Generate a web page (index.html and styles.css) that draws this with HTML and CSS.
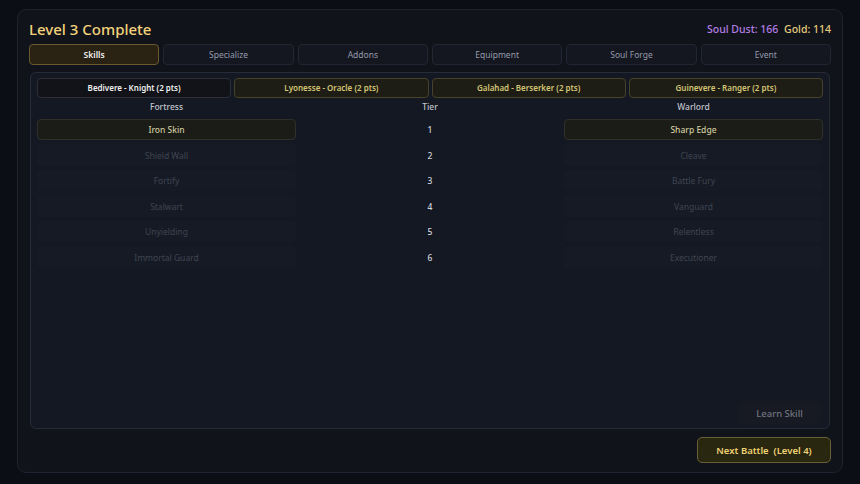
FILE: index.html
```html
<!DOCTYPE html>
<html lang="en">
<head>
    <meta charset="UTF-8">
    <meta name="viewport" content="width=device-width, initial-scale=1.0">
    <title>Level 3 Complete</title>
    <link rel="stylesheet" href="styles.css">
</head>
<body>
    <div class="panel">
        <div class="header">
            <h1>Level 3 Complete</h1>
            <div class="currency">
                <span class="dust">Soul Dust: 166</span>
                <span class="gold">Gold: 114</span>
            </div>
        </div>

        <div class="tabs">
            <div class="tab active">Skills</div>
            <div class="tab">Specialize</div>
            <div class="tab">Addons</div>
            <div class="tab">Equipment</div>
            <div class="tab">Soul Forge</div>
            <div class="tab">Event</div>
        </div>

        <div class="skills">
            <div class="heroes">
                <div class="hero selected">Bedivere - Knight (2 pts)</div>
                <div class="hero">Lyonesse - Oracle (2 pts)</div>
                <div class="hero">Galahad - Berserker (2 pts)</div>
                <div class="hero">Guinevere - Ranger (2 pts)</div>
            </div>

            <div class="tree">
                <div class="col-head">Fortress</div>
                <div class="col-head">Tier</div>
                <div class="col-head">Warlord</div>

                <div class="skill learned">Iron Skin</div>
                <div class="tier">1</div>
                <div class="skill learned">Sharp Edge</div>

                <div class="skill">Shield Wall</div>
                <div class="tier">2</div>
                <div class="skill">Cleave</div>

                <div class="skill">Fortify</div>
                <div class="tier">3</div>
                <div class="skill">Battle Fury</div>

                <div class="skill">Stalwart</div>
                <div class="tier">4</div>
                <div class="skill">Vanguard</div>

                <div class="skill">Unyielding</div>
                <div class="tier">5</div>
                <div class="skill">Relentless</div>

                <div class="skill">Immortal Guard</div>
                <div class="tier">6</div>
                <div class="skill">Executioner</div>
            </div>

            <button class="learn">Learn Skill</button>
        </div>

        <div class="footer">
            <button class="next">Next Battle&nbsp; (Level 4)</button>
        </div>
    </div>
</body>
</html>
```

FILE: styles.css
```css
/* page */
body {
    margin: 0;
    background-color: #0c0e15;
    font-family: "Noto Sans", "Open Sans", sans-serif;
    color: #c4c8d0;
}

.panel {
    margin: 9px 0 0 17px;
    width: 826px;
    height: 464px;
    box-sizing: border-box;
    padding: 7px 11px 9px 11px;
    background-color: #11131b;
    border: 1px solid #1f2330;
    border-radius: 9px;
    display: flex;
    flex-direction: column;
}

/* title + currency */
.header {
    display: flex;
    justify-content: space-between;
    align-items: center;
    height: 24px;
    margin-bottom: 3px;
}

h1 {
    margin: 0;
    font-size: 15px;
    font-weight: 500;
    color: #f2d27a;
}

.currency {
    font-size: 10.5px;
    font-weight: 500;
}

.dust {
    color: #b47ee4;
    margin-right: 3px;
}

.gold {
    color: #e6cc7c;
}

/* main tabs */
.tabs {
    display: grid;
    grid-template-columns: repeat(6, 1fr);
    gap: 4px;
    margin-bottom: 7px;
}

.tab {
    height: 21px;
    box-sizing: border-box;
    display: flex;
    align-items: center;
    justify-content: center;
    font-size: 8.5px;
    color: #959bab;
    background-color: #141620;
    border: 1px solid #222532;
    border-radius: 4px;
}

.tab.active {
    background-color: #2a2313;
    border-color: #6a5a2f;
    color: #efefef;
    font-weight: 600;
}

/* skill panel */
.skills {
    height: 358px;
    box-sizing: border-box;
    margin: 0 1px;
    padding: 5px 6px 3px 6px;
    background-color: #141823;
    border: 1px solid #262b38;
    border-radius: 6px;
    display: flex;
    flex-direction: column;
}

.heroes {
    display: grid;
    grid-template-columns: repeat(4, 1fr);
    gap: 3px;
}

.hero {
    height: 20px;
    box-sizing: border-box;
    display: flex;
    align-items: center;
    justify-content: center;
    font-size: 8px;
    font-weight: 600;
    color: #d4c676;
    background-color: #1e1d15;
    border: 1px solid #47422a;
    border-radius: 4px;
}

.hero.selected {
    color: #f0f0f0;
    background-color: #111318;
    border-color: #2c2f38;
}

.tree {
    display: grid;
    grid-template-columns: 259px 1fr 259px;
    grid-template-rows: 16px;
    grid-auto-rows: 21.5px;
    row-gap: 4px;
    margin-top: 1px;
}

.tree .col-head {
    font-size: 8.5px;
    font-weight: 500;
    color: #c2c6ce;
    text-align: center;
    line-height: 16px;
}

.skill {
    display: flex;
    align-items: center;
    justify-content: center;
    font-size: 8.5px;
    color: #3f4552;
    background-color: #161a24;
    border-radius: 4px;
}

.skill.learned {
    color: #cfcb9f;
    font-weight: 500;
    background-color: #1b1c17;
    border: 1px solid #2f302a;
}

.tier {
    display: flex;
    align-items: center;
    justify-content: center;
    font-size: 8.5px;
    font-weight: 500;
    color: #d0d4dc;
}

.learn {
    margin-top: auto;
    margin-right: 2px;
    align-self: flex-end;
    width: 83px;
    height: 24px;
    font-family: inherit;
    font-size: 9.5px;
    font-weight: 500;
    color: #6f7480;
    background-color: #171a22;
    border: none;
    border-radius: 5px;
}

/* bottom button */
.footer {
    margin-top: 8px;
    display: flex;
    justify-content: flex-end;
}

.next {
    width: 134px;
    height: 26px;
    font-family: inherit;
    font-size: 9.5px;
    font-weight: 600;
    color: #f0d274;
    background-color: #29270f;
    border: 1px solid #676038;
    border-radius: 5px;
}
```
